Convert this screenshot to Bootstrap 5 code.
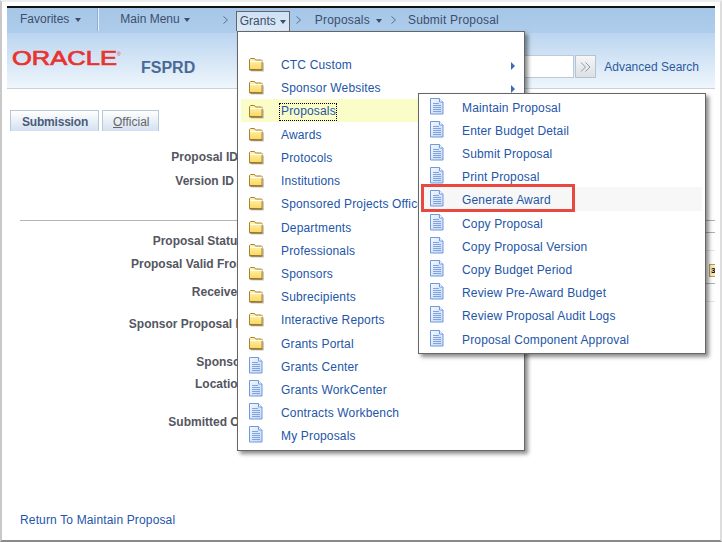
<!DOCTYPE html>
<html lang="en">
<head>
<meta charset="UTF-8">
<title>Submit Proposal</title>
<link href="https://cdn.jsdelivr.net/npm/bootstrap@5.3.0/dist/css/bootstrap.min.css" rel="stylesheet">
<style>
  html, body { margin: 0; background: #fff; overflow: hidden; }
  body { font-family: "Liberation Sans", Arial, sans-serif; font-size: 12px; }

  .shot-frame {
    position: relative;
    width: 722px;
    height: 542px;
    padding: 4px 5px 0;
    border-style: solid;
    border-width: 2px 2px 2px 2px;
    border-color: #eee #ddd #8a8a8a #c8c8c8;
  }
  .page-wrap { border-top: 2px solid #111; height: 100%; }

  /* top nav */
  .top-nav {
    height: 25px;
    padding-left: 13px;
    background: linear-gradient(#a6c6e8, #aecdeb);
    color: #3d4e6b;
  }
  .nav-sep { width: 1px; height: 23px; margin: 0 21px 0 17px; background: #e4eef8; box-shadow: -1px 0 0 #8fb0d4; }
  .nav-tri { display: inline-block; margin-left: 4px; border-style: solid; border-width: 4px 3.5px 0; border-color: #3d4e6b transparent transparent; }
  .nav-tri-wide { margin-left: 6px; }
  .crumb { display: block; flex: none; width: 5px; height: 8px; margin-top: 8px; }
  .crumb-grants { margin-left: 33px; }
  .crumb-a { margin-left: 6px; }
  .crumb-b { margin-left: 9px; }
  .nav-cur {
    height: 20px;
    margin: 3px 0 0 8px;
    padding: 0 3px;
    border: 1px solid #666;
    border-bottom: 0;
    background: linear-gradient(#cfe1f4, #dbe9f7);
  }
  .nav-top { margin-top: 2px; line-height: 18px; }
  .nav-txt { margin-top: 3px; line-height: 18px; letter-spacing: .2px; }
  .nav-gap { margin-left: 14px; }
  .nav-gap2 { margin-left: 12px; }

  /* banner */
  .brand-bar {
    height: 56px;
    padding: 0 16px 0 5px;
    background: linear-gradient(#bbd5f0, #eff6fc);
    border-bottom: 1px solid #ccd2da;
  }
  .brand-logo { display: block; flex: none; margin-top: 14px; }
  .brand-env { margin: 26px 0 0 5px; font-size: 16px; font-weight: 700; line-height: 18px; color: #4a6a96; }
  .srch-box { width: 80px; height: 23px; margin-top: 22px; background: #fff; border: 1px solid #bcc9d8; border-left: 0; }
  .srch-btn { width: 21px; height: 23px; margin: 22px 8px 0 1px; background: linear-gradient(#f6f6f6, #dcdfe4); border: 1px solid #b4c2d2; }
  .srch-link { margin-top: 25px; color: #2a5a9e; line-height: 18px; }

  /* tabs */
  .tab-row { margin: 21px 0 0 3px; height: 21px; }
  .tab-item {
    height: 21px;
    padding: 3px 9px 0 10px;
    margin-right: 3px;
    border: 1px solid #b8c8da;
    border-bottom: 0;
    background: linear-gradient(#fff, #d3e1f0);
    color: #666;
    line-height: 16px;
  }
  .tab-on { padding: 3px 10px 0 11px; font-weight: 700; color: #4b5c78; letter-spacing: -.2px; }

  /* form behind the menus */
  .fld-list { margin-top: 15px; }
  .fld-lbl {
    width: 240px;
    height: 22px;
    line-height: 22px;
    text-align: right;
    font-weight: 700;
    color: #54565f;
    white-space: nowrap;
  }
  .pr-id { padding-right: 9px; }
  .pr-ver { padding-right: 13px; }
  .pr-st { padding-right: 3px; }
  .pr-rc { width: 238px; }
  .pr-rv { width: 237.5px; }
  .pr-sp { width: 240.5px; }
  .sp-1 { margin-top: 1px; }
  .sp-2 { margin-top: 2px; }
  .sp-6 { margin-top: 6px; }
  .sp-10 { margin-top: 10px; }
  .sp-16 { margin-top: 16px; }
  .fld-rule { height: 1px; margin: 28px 0 9px 13px; background: #b5b5b5; }
  .back-link { margin: auto 0 11px 13px; line-height: 18px; color: #2355a8; letter-spacing: .15px; }

  /* stubs that stick out right of the submenu */
  .edge-col { width: 10px; flex: none; padding-top: 131px; overflow: hidden; }
  .edge-ln { height: 1px; background: #b0b0b0; }
  .edge-lt { background: #dde6f0; }
  .edge-cal {
    width: 12px;
    height: 13px;
    margin: 13px 0 6px 4px;
    background: #fbeab8;
    border: 1px solid #b59b62;
    color: #000;
    font: 700 8px/11px "Liberation Sans", sans-serif;
    padding-left: 1px;
  }
  .m11 { margin-top: 11px; }
  .m17 { margin-top: 17px; }

  /* menus */
  .pop-menu.dropdown-menu {
    display: block;
    position: absolute;
    min-width: 0;
    margin: 0;
    border: 1px solid #666;
    border-radius: 0;
    background: #fff;
    box-shadow: 3px 3px 4px rgba(0, 0, 0, .45);
    font-size: 12px;
    letter-spacing: .16px;
  }
  .pop-main { left: 235px; top: 29px; width: 288px; height: 420px; padding: 20.2px 0 0; z-index: 20; }
  .pop-sub { left: 416px; top: 91px; width: 288px; height: 261px; padding: .6px 0 0; z-index: 30; }
  .pop-menu .dropdown-item {
    height: 23.2px;
    padding: 4px 0 0 8px;
    color: #2355a8;
    line-height: 19px;
    margin-left: 3px;
    width: 282px;
    overflow: hidden;
  }
  .pop-sub .dropdown-item { padding-left: 7px; margin-left: 4px; width: 279px; }
  .pop-menu .dropdown-item:hover { background: none; }
  .pop-menu .item-hot, .pop-menu .item-hot:hover { background: #fbfdc9; }
  .pop-menu .item-sel, .pop-menu .item-sel:hover { background: #f7f7f7; }
  .item-ico { flex: none; width: 15px; height: 17px; margin-right: 17px; }
  .item-ico-doc { margin-top: -4px; }
  .item-focus { outline: 1px dotted #000; outline-offset: 0; line-height: 15px; padding: 0 0 1px 1px; margin-left: -1px; }
  .item-more { margin: 0 8px 0 auto; border-style: solid; border-width: 4px 0 4px 4px; border-color: transparent transparent transparent #3b6db5; }
  .red-mark { position: absolute; left: 419px; top: 182px; width: 154px; height: 28px; border: 3px solid #e8483f; z-index: 40; }
</style>
</head>
<body>

<svg width="0" height="0" class="d-block">
  <defs>
    <linearGradient id="fold-fill" x1="0" y1="0" x2="0" y2="1">
      <stop offset="0" stop-color="#fff7b8"/>
      <stop offset="1" stop-color="#fbd65a"/>
    </linearGradient>
    <linearGradient id="doc-fill" x1="0" y1="0" x2="1" y2="1">
      <stop offset="0" stop-color="#f4f8ff"/>
      <stop offset="1" stop-color="#c4d7f6"/>
    </linearGradient>
    <symbol id="ico-folder" viewBox="0 0 15 17">
      <path d="M2 5.5h13v9H2z" fill="#cfc9bb"/>
      <path d="M.5 12.5v-10l1-1h4l1 1.500h6l.5.500v9.500z" fill="url(#fold-fill)" stroke="#a9822f"/>
      <path d="M1 4.500h12" stroke="#fff" fill="none"/>
      <path d="M.5 13h13" stroke="#7d6128" fill="none"/>
    </symbol>
    <symbol id="ico-doc" viewBox="0 0 15 17">
      <path d="M.5.5h9l3.500 3.500v12h-12.500z" fill="url(#doc-fill)" stroke="#6f9ae0"/>
      <path d="M9.500.5v3.500h3.500" fill="#fff" stroke="#6f9ae0"/>
      <path d="M3 5.500h6M3 7.500h8M3 9.500h8M3 11.500h8M3 13.500h8" stroke="#7fa3de" fill="none"/>
    </symbol>
  </defs>
</svg>

<div class="shot-frame">
  <div class="page-wrap d-flex flex-column">

    <div class="top-nav d-flex align-items-start">
      <span class="nav-top">Favorites<i class="nav-tri nav-tri-wide align-middle"></i></span>
      <span class="nav-sep"></span>
      <span class="nav-top">Main Menu<i class="nav-tri align-middle"></i></span>
      <svg class="crumb crumb-grants" viewBox="0 0 5 8"><path d="M.5.5l4 3.500-4 3.500" fill="none" stroke="#5a6f8e"/></svg>
      <span class="nav-cur">Grants<i class="nav-tri align-middle"></i></span>
      <svg class="crumb crumb-a" viewBox="0 0 5 8"><path d="M.5.5l4 3.500-4 3.500" fill="none" stroke="#5a6f8e"/></svg>
      <span class="nav-txt nav-gap">Proposals<i class="nav-tri nav-tri-wide align-middle"></i></span>
      <svg class="crumb crumb-b" viewBox="0 0 5 8"><path d="M.5.5l4 3.500-4 3.500" fill="none" stroke="#5a6f8e"/></svg>
      <span class="nav-txt nav-gap2">Submit Proposal</span>
    </div>

    <div class="brand-bar d-flex align-items-start">
      <svg class="brand-logo" width="124" height="24" viewBox="0 0 124 24">
        <text x="0" y="18" font-family="Liberation Sans" font-size="20" fill="#e8342f" stroke="#e8342f" stroke-width=".7" textLength="105" lengthAdjust="spacingAndGlyphs">ORACLE</text>
        <text x="105" y="9" font-family="Liberation Sans" font-size="5" fill="#e8342f">®</text>
      </svg>
      <span class="brand-env">FSPRD</span>
      <span class="srch-box ms-auto"></span>
      <span class="srch-btn d-flex align-items-center justify-content-center">
        <svg width="11" height="10" viewBox="0 0 11 10"><path d="M1 .5l4.500 4.500-4.500 4.500M5.500.5l4.500 4.500-4.500 4.500" fill="none" stroke="#8e9aa8"/></svg>
      </span>
      <span class="srch-link">Advanced Search</span>
    </div>

    <div class="d-flex flex-grow-1">
      <div class="flex-grow-1 d-flex flex-column">
        <div class="tab-row d-flex">
          <div class="tab-item tab-on">Submission</div>
          <div class="tab-item"><u>O</u>fficial</div>
        </div>
        <div class="fld-list">
          <div class="fld-lbl pr-id">Proposal ID</div>
          <div class="fld-lbl pr-ver sp-2">Version ID</div>
          <div class="fld-rule"></div>
          <div class="fld-lbl pr-st">Proposal Status</div>
          <div class="fld-lbl sp-1">Proposal Valid From</div>
          <div class="fld-lbl pr-rv sp-6">Received</div>
          <div class="fld-lbl pr-sp sp-10">Sponsor Proposal ID</div>
          <div class="fld-lbl pr-rc sp-16">Sponsor</div>
          <div class="fld-lbl pr-rc">Location</div>
          <div class="fld-lbl sp-16">Submitted On</div>
        </div>
        <div class="back-link">Return To Maintain Proposal</div>
      </div>
      <div class="edge-col">
        <div class="edge-ln"></div>
        <div class="edge-ln m11"></div>
        <div class="edge-ln edge-lt m17"></div>
        <div class="edge-cal">3</div>
        <div class="edge-ln"></div>
        <div class="edge-ln edge-lt m17"></div>
      </div>
    </div>
  </div>

  <div class="dropdown-menu pop-menu pop-main">
    <a class="dropdown-item d-flex align-items-center"><svg class="item-ico"><use href="#ico-folder"/></svg>CTC Custom<i class="item-more"></i></a>
    <a class="dropdown-item d-flex align-items-center"><svg class="item-ico"><use href="#ico-folder"/></svg>Sponsor Websites<i class="item-more"></i></a>
    <a class="dropdown-item item-hot d-flex align-items-center"><svg class="item-ico"><use href="#ico-folder"/></svg><span class="item-focus">Proposals</span></a>
    <a class="dropdown-item d-flex align-items-center"><svg class="item-ico"><use href="#ico-folder"/></svg>Awards</a>
    <a class="dropdown-item d-flex align-items-center"><svg class="item-ico"><use href="#ico-folder"/></svg>Protocols</a>
    <a class="dropdown-item d-flex align-items-center"><svg class="item-ico"><use href="#ico-folder"/></svg>Institutions</a>
    <a class="dropdown-item d-flex align-items-center"><svg class="item-ico"><use href="#ico-folder"/></svg>Sponsored Projects Office</a>
    <a class="dropdown-item d-flex align-items-center"><svg class="item-ico"><use href="#ico-folder"/></svg>Departments</a>
    <a class="dropdown-item d-flex align-items-center"><svg class="item-ico"><use href="#ico-folder"/></svg>Professionals</a>
    <a class="dropdown-item d-flex align-items-center"><svg class="item-ico"><use href="#ico-folder"/></svg>Sponsors</a>
    <a class="dropdown-item d-flex align-items-center"><svg class="item-ico"><use href="#ico-folder"/></svg>Subrecipients</a>
    <a class="dropdown-item d-flex align-items-center"><svg class="item-ico"><use href="#ico-folder"/></svg>Interactive Reports</a>
    <a class="dropdown-item d-flex align-items-center"><svg class="item-ico"><use href="#ico-folder"/></svg>Grants Portal</a>
    <a class="dropdown-item d-flex align-items-center"><svg class="item-ico item-ico-doc"><use href="#ico-doc"/></svg>Grants Center</a>
    <a class="dropdown-item d-flex align-items-center"><svg class="item-ico item-ico-doc"><use href="#ico-doc"/></svg>Grants WorkCenter</a>
    <a class="dropdown-item d-flex align-items-center"><svg class="item-ico item-ico-doc"><use href="#ico-doc"/></svg>Contracts Workbench</a>
    <a class="dropdown-item d-flex align-items-center"><svg class="item-ico item-ico-doc"><use href="#ico-doc"/></svg>My Proposals</a>
  </div>

  <div class="dropdown-menu pop-menu pop-sub">
    <a class="dropdown-item d-flex align-items-center"><svg class="item-ico item-ico-doc"><use href="#ico-doc"/></svg>Maintain Proposal</a>
    <a class="dropdown-item d-flex align-items-center"><svg class="item-ico item-ico-doc"><use href="#ico-doc"/></svg>Enter Budget Detail</a>
    <a class="dropdown-item d-flex align-items-center"><svg class="item-ico item-ico-doc"><use href="#ico-doc"/></svg>Submit Proposal</a>
    <a class="dropdown-item d-flex align-items-center"><svg class="item-ico item-ico-doc"><use href="#ico-doc"/></svg>Print Proposal</a>
    <a class="dropdown-item item-sel d-flex align-items-center"><svg class="item-ico item-ico-doc"><use href="#ico-doc"/></svg>Generate Award</a>
    <a class="dropdown-item d-flex align-items-center"><svg class="item-ico item-ico-doc"><use href="#ico-doc"/></svg>Copy Proposal</a>
    <a class="dropdown-item d-flex align-items-center"><svg class="item-ico item-ico-doc"><use href="#ico-doc"/></svg>Copy Proposal Version</a>
    <a class="dropdown-item d-flex align-items-center"><svg class="item-ico item-ico-doc"><use href="#ico-doc"/></svg>Copy Budget Period</a>
    <a class="dropdown-item d-flex align-items-center"><svg class="item-ico item-ico-doc"><use href="#ico-doc"/></svg>Review Pre-Award Budget</a>
    <a class="dropdown-item d-flex align-items-center"><svg class="item-ico item-ico-doc"><use href="#ico-doc"/></svg>Review Proposal Audit Logs</a>
    <a class="dropdown-item d-flex align-items-center"><svg class="item-ico item-ico-doc"><use href="#ico-doc"/></svg>Proposal Component Approval</a>
  </div>

  <div class="red-mark"></div>
</div>

<script src="https://cdn.jsdelivr.net/npm/bootstrap@5.3.0/dist/js/bootstrap.bundle.min.js"></script>
</body>
</html>
